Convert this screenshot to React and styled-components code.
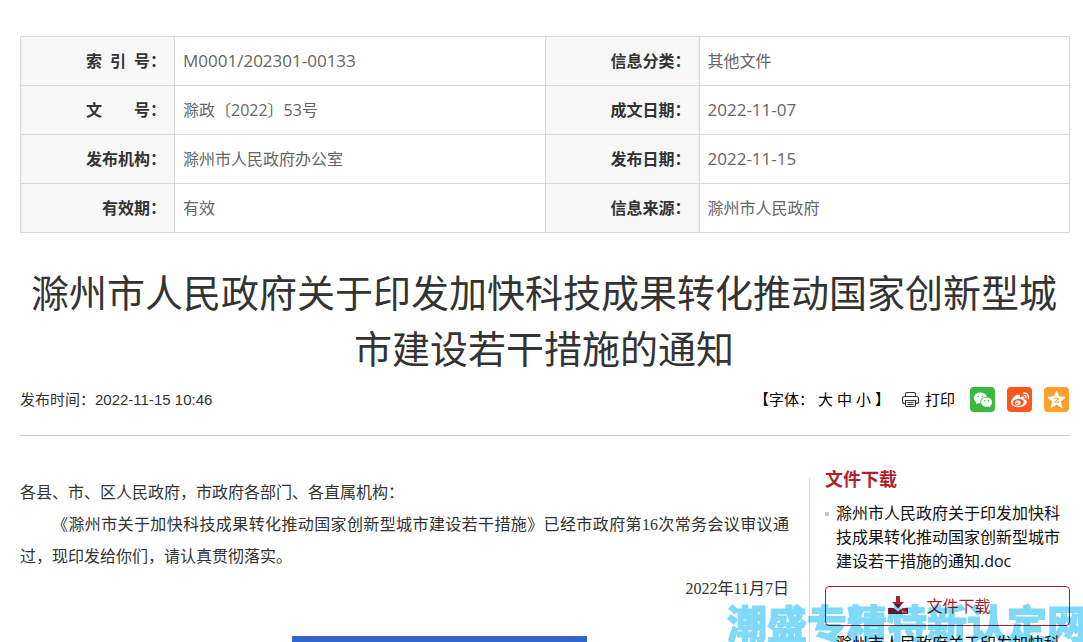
import React from 'react'
import styled, { createGlobalStyle } from 'styled-components'
import { RiWechatFill, RiWeiboFill } from 'react-icons/ri'

const records = [
  [
    { label: '索 引 号', value: 'M0001/202301-00133', latin: true },
    { label: '信息分类', value: '其他文件' },
  ],
  [
    { label: '文 号', value: '滁政〔2022〕53号' },
    { label: '成文日期', value: '2022-11-07', latin: true },
  ],
  [
    { label: '发布机构', value: '滁州市人民政府办公室' },
    { label: '发布日期', value: '2022-11-15', latin: true },
  ],
  [
    { label: '有效期', value: '有效', short: true },
    { label: '信息来源', value: '滁州市人民政府' },
  ],
]

const files = [
  '滁州市人民政府关于印发加快科技成果转化推动国家创新型城市建设若干措施的通知.doc',
  '滁州市人民政府关于印发加快科技成果转化推动国家创新型城市建设若干措施的通知.pdf',
]

const PrintIcon = () => (
  <svg width='17' height='17' viewBox='0 0 17 17' fill='none' stroke='#333' strokeWidth='1.2' aria-hidden='true'>
    <path d='M3.500 5.500V3q0-1.500 1.500-1.500h7q1.500 0 1.500 1.500v2.500' />
    <path d='M3.500 12.500h-1q-2 0-2-2v-3q0-2 2-2h12q2 0 2 2v3q0 2-2 2h-1' />
    <path d='M3.500 9.500h10v4.500q0 1.500-1.500 1.500H5q-1.500 0-1.500-1.500zM5.500 11.500h6M5.500 13.500h6' />
  </svg>
)

const DownloadIcon = () => (
  <svg width='20' height='19' viewBox='0 0 20 19' fill='#b01f2e' aria-hidden='true'>
    <path d='M8 0h4v6h4l-6 6.500-6-6.500h4z' />
    <path d='M0 12h5.500l4.500 3.500 4.500-3.500H20v6H0z' />
    <path d='M14 16h1.500M17 16h1.500' stroke='#fff' />
  </svg>
)

const StarIcon = () => (
  <svg width='19' height='19' viewBox='0 0 19 19' aria-hidden='true'>
    <path
      fill='#fff'
      stroke='#fff'
      strokeLinejoin='round'
      d='M9.500 1.500l2.500 5.300 6 .600-4.600 4 1.400 6-5.300-3.200-5.300 3.200 1.400-6L1 7.400 7 6.800z'
    />
    <path fill='none' stroke='#ff9f2e' d='M6.500 8.500q2.500-.5 5.500 0l-4.500 3.500q2.500.5 5 0' />
  </svg>
)

const App = () => {
  return (
    <>
      <GlobalStyle />
      <Page>
        <InfoTable>
          <colgroup>
            <col className='label' />
            <col />
            <col className='label' />
            <col />
          </colgroup>
          <tbody>
            {records.map((row) => (
              <tr key={row[0].label}>
                {row.map(({ label, value, latin, short }) => (
                  <React.Fragment key={label}>
                    <Label scope='row'>
                      <Spread $short={short}>{label}</Spread>：
                    </Label>
                    <Value $latin={latin}>{value}</Value>
                  </React.Fragment>
                ))}
              </tr>
            ))}
          </tbody>
        </InfoTable>

        <Title>滁州市人民政府关于印发加快科技成果转化推动国家创新型城市建设若干措施的通知</Title>

        <Meta>
          <span>发布时间：2022-11-15 10:46</span>
          <Tools>
            <FontSize>
              <span>【字体：</span>
              <TextButton>大</TextButton>
              <TextButton>中</TextButton>
              <TextButton>小</TextButton>
              <span>】</span>
            </FontSize>
            <TextButton>
              <PrintIcon />
              打印
            </TextButton>
            <Shares>
              <Share $color='#3bb83f' aria-label='微信'>
                <RiWechatFill size={20} />
              </Share>
              <Share $color='#f9571d' aria-label='微博'>
                <RiWeiboFill size={20} />
              </Share>
              <Share $color='#ff9f2e' aria-label='QQ空间'>
                <StarIcon />
              </Share>
            </Shares>
          </Tools>
        </Meta>

        <Content>
          <Article>
            <p>各县、市、区人民政府，市政府各部门、各直属机构：</p>
            <p className='indent'>
              《滁州市关于加快科技成果转化推动国家创新型城市建设若干措施》已经市政府第16次常务会议审议通过，现印发给你们，请认真贯彻落实。
            </p>
            <p className='date'>2022年11月7日</p>
            <Banner />
          </Article>
          <Sidebar>
            <h2>文件下载</h2>
            <ul>
              {files.map((name) => (
                <li key={name}>
                  <FileLink href='#'>{name}</FileLink>
                  <Download>
                    <DownloadIcon />
                    文件下载
                  </Download>
                </li>
              ))}
            </ul>
          </Sidebar>
        </Content>
        <Watermark>潮盛专精特新认定网</Watermark>
      </Page>
    </>
  )
}

const GlobalStyle = createGlobalStyle`
  * {
    box-sizing: border-box;
  }
  body {
    margin: 0;
    background: #fff;
    color: #333;
    font-family: 'Open Sans', 'Noto Sans CJK SC', sans-serif;
    font-size: 16px;
  }
  button {
    padding: 0;
    border: 0;
    background: none;
    font: inherit;
    cursor: pointer;
  }
`

const Page = styled.main`
  height: 100vh;
  overflow: hidden;
  padding: 36px 13px 0 20px;
`

const InfoTable = styled.table`
  width: 100%;
  table-layout: fixed;
  border-collapse: collapse;
  line-height: 24px;

  .label {
    width: 154px;
  }
  th,
  td {
    height: 49px;
    border: 1px solid #d9d9d9;
  }
`

const Label = styled.th`
  padding: 0 8px 2px 0;
  background: #f7f7f7;
  text-align: right;
  font-family: 'Noto Sans CJK SC', sans-serif;
  font-weight: 700;
  white-space: nowrap;
`

const Spread = styled.span`
  display: inline-block;
  width: ${({ $short }) => ($short ? 'auto' : '4em')};
  text-align: justify;
  text-align-last: justify;
`

const Value = styled.td`
  padding: 0 8px;
  color: #666;
  font-size: ${({ $latin }) => ($latin ? '17px' : '16px')};
`

const Title = styled.h1`
  margin: 30px 0 0;
  padding-right: 2px;
  color: #333;
  font-family: 'Noto Sans CJK SC', sans-serif;
  font-size: 38px;
  font-weight: 400;
  line-height: 56px;
  text-align: center;
`

const Meta = styled.div`
  display: flex;
  align-items: center;
  justify-content: space-between;
  height: 61px;
  padding: 0 1px 11px 0;
  border-bottom: 1px solid #ccc;
  font-family: 'Liberation Sans', 'Noto Sans CJK SC', sans-serif;
  font-size: 15px;
  line-height: 22px;
`

const Tools = styled.div`
  display: flex;
  align-items: center;
  gap: 12px;
  color: #000;
`

const FontSize = styled.div`
  display: flex;
  gap: 4px;
`

const TextButton = styled.button`
  display: flex;
  align-items: center;
  gap: 6px;
  color: #000;
`

const Shares = styled.div`
  display: flex;
  gap: 12px;
  margin-left: 3px;
`

const Share = styled.button`
  display: grid;
  place-items: center;
  width: 25px;
  height: 25px;
  border-radius: 4px;
  background: ${({ $color }) => $color};
  color: #fff;
`

const Content = styled.div`
  display: flex;
  align-items: flex-start;
  padding-top: 41px;
`

const Article = styled.article`
  flex: 1;
  padding-right: 20px;
  font-family: 'Liberation Serif', 'Noto Sans CJK SC', serif;
  line-height: 32px;

  p {
    margin: 0;
    text-align: justify;
  }
  .indent {
    text-indent: 2em;
  }
  .date {
    text-align: right;
  }
`

const Banner = styled.div`
  width: 295px;
  height: 48px;
  margin: 31px 0 0 272px;
  background: #3366cc;
`

const Sidebar = styled.aside`
  width: 261px;
  min-height: 400px;
  padding-left: 15px;
  border-left: 1px solid #ddd;
  font-family: 'Open Sans', 'Noto Sans CJK SC', sans-serif;

  h2 {
    margin: -11px 0 9px;
    color: #b01f2e;
    font-size: 18px;
    font-weight: 700;
    line-height: 26px;
  }
  ul {
    margin: 0;
    padding: 0;
    list-style: none;
  }
`

const FileLink = styled.a`
  display: flex;
  align-items: flex-start;
  gap: 7px;
  color: #111;
  line-height: 24px;
  text-decoration: none;
  word-break: break-all;

  &::before {
    content: '';
    flex: none;
    width: 4px;
    height: 4px;
    margin-top: 11px;
    background: #c4c4c4;
  }
`

const Download = styled.button`
  display: flex;
  align-items: center;
  justify-content: center;
  gap: 18px;
  width: 100%;
  height: 40px;
  margin: 13px 0 5px;
  padding: 0 16px 2px 0;
  border: 1px solid #b01f2e;
  border-radius: 4px;
  color: #b01f2e;
`

const Watermark = styled.div`
  position: fixed;
  right: -4px;
  bottom: -10px;
  color: #5fd0f8;
  font-family: 'Noto Sans CJK SC', sans-serif;
  font-size: 40px;
  font-weight: 900;
  line-height: 60px;
  opacity: 0.8;
  mix-blend-mode: multiply;
  pointer-events: none;
  white-space: nowrap;
  -webkit-text-stroke: 1px #5fd0f8;
`

export default App
